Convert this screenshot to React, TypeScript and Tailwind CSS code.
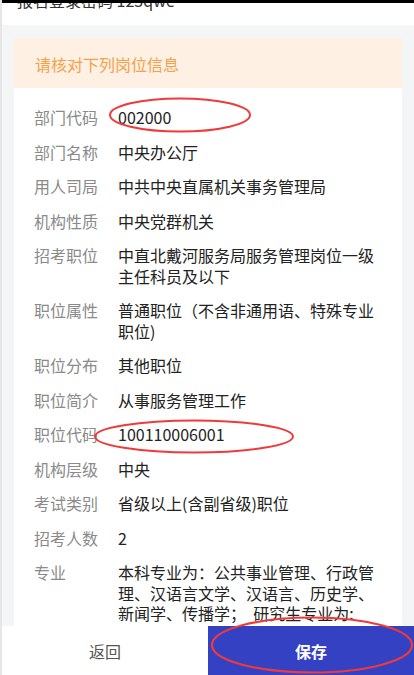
import React from "react";

const rows: { label: string; value: React.ReactNode }[] = [
    { label: "部门代码", value: "002000" },
    { label: "部门名称", value: "中央办公厅" },
    { label: "用人司局", value: "中共中央直属机关事务管理局" },
    { label: "机构性质", value: "中央党群机关" },
    { label: "招考职位", value: "中直北戴河服务局服务管理岗位一级主任科员及以下" },
    { label: "职位属性", value: "普通职位（不含非通用语、特殊专业职位)" },
    { label: "职位分布", value: "其他职位" },
    { label: "职位简介", value: "从事服务管理工作" },
    { label: "职位代码", value: "100110006001" },
    { label: "机构层级", value: "中央" },
    { label: "考试类别", value: "省级以上(含副省级)职位" },
    { label: "招考人数", value: "2" },
    {
        label: "专业",
        value: (
            <>
                本科专业为：公共事业管理、行政管理、汉语言文学、汉语言、历史学、新闻学、传播学；{"\u00a0 "}研究生专业为:
                <br />
                公共管理、中国语言文学、历史学
            </>
        ),
    },
];

export default function App() {
    return (
        <div
            className="relative w-[414px] h-[675px] overflow-hidden flex flex-col bg-white border-l-2 border-[#e6e6e6]"
            style={{ fontFamily: '"Noto Sans CJK SC", "Noto Sans", sans-serif' }}
        >
            {/* Status strip + cut-off line above */}
            <div className="h-[3px] bg-black shrink-0 relative z-10" />
            <div className="h-[22px] shrink-0 overflow-hidden bg-white">
                <p className="-mt-[14px] pl-[15px] text-[16px] leading-[22px] text-[#333]">
                    报名登录密码 123qwe
                </p>
            </div>

            {/* Content */}
            <div className="flex-1 overflow-hidden bg-[#f4f5f7] pt-[13px] px-[12px]">
                <div className="bg-white">
                    <div className="h-[50px] bg-[#fef1e3] flex items-center pl-[21px] pt-[1px]">
                        <span className="text-[16px] text-[#f6a04c]">请核对下列岗位信息</span>
                    </div>
                    <div className="pt-[12px] pl-[20px] pr-[20px]">
                        {rows.map((r) => (
                            <div key={r.label} className="flex py-[7px] text-[16px] leading-[20.5px]">
                                <span className="w-[84px] shrink-0 text-[#8a8a8a]">{r.label}</span>
                                <span className="flex-1 text-[#222]">{r.value}</span>
                            </div>
                        ))}
                    </div>
                </div>
            </div>

            {/* Footer */}
            <div className="h-[49px] shrink-0 flex">
                <button className="w-[206px] bg-white text-[16px] text-[#555]">返回</button>
                <button className="flex-1 bg-[#3541c3] text-[16px] font-bold text-white">保存</button>
            </div>

            {/* Red annotation ellipses */}
            <svg className="absolute left-0 top-0 pointer-events-none" width="414" height="675">
                <ellipse cx="178" cy="115" rx="70" ry="16.5" fill="none" stroke="#ef3a3a" strokeWidth="2" />
                <ellipse cx="192" cy="436.5" rx="99" ry="16" fill="none" stroke="#ef3a3a" strokeWidth="2" />
                <ellipse cx="310" cy="645" rx="100" ry="27.5" fill="none" stroke="#ef3a3a" strokeWidth="2.2" />
            </svg>
        </div>
    );
}
